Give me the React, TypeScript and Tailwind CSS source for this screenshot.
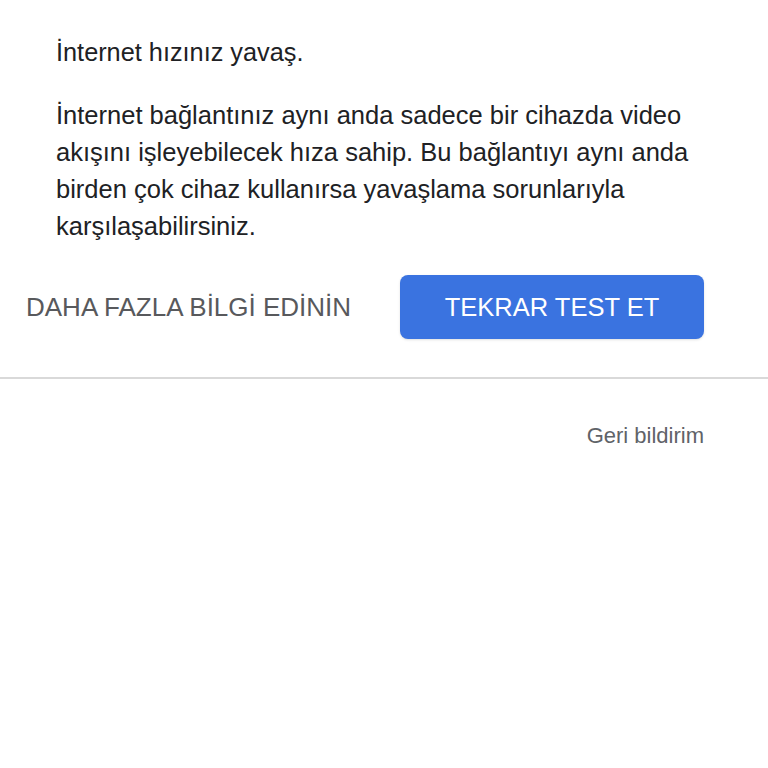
export default function App() {
  return (
    <div className="min-h-screen bg-white text-[#202124]" style={{ fontFamily: '"Liberation Sans", Arial, sans-serif' }}>
      <div className="px-14 pt-[35px]">
        <p className="text-[25.3px] leading-[34px]">İnternet hızınız yavaş.</p>
        <p className="mt-[28px] text-[25.5px] leading-[37px]">
          İnternet bağlantınız aynı anda sadece bir cihazda video akışını işleyebilecek hıza sahip. Bu bağlantıyı aynı anda birden çok cihaz kullanırsa yavaşlama sorunlarıyla karşılaşabilirsiniz.
        </p>
      </div>
      <div className="mt-[30px] flex items-center pl-[26px] pr-16">
        <button className="text-[26px] text-[#58595c]">DAHA FAZLA BİLGİ EDİNİN</button>
        <button className="ml-auto h-16 w-[304px] rounded-lg bg-[#3a73e0] text-[25.5px] text-white shadow-sm">
          TEKRAR TEST ET
        </button>
      </div>
      <div className="mt-[38px] border-t-2 border-[#d9d9d9]" />
      <div className="flex justify-end pr-16 pt-[40px]">
        <span className="text-[22px] text-[#5f6368]">Geri bildirim</span>
      </div>
    </div>
  );
}
